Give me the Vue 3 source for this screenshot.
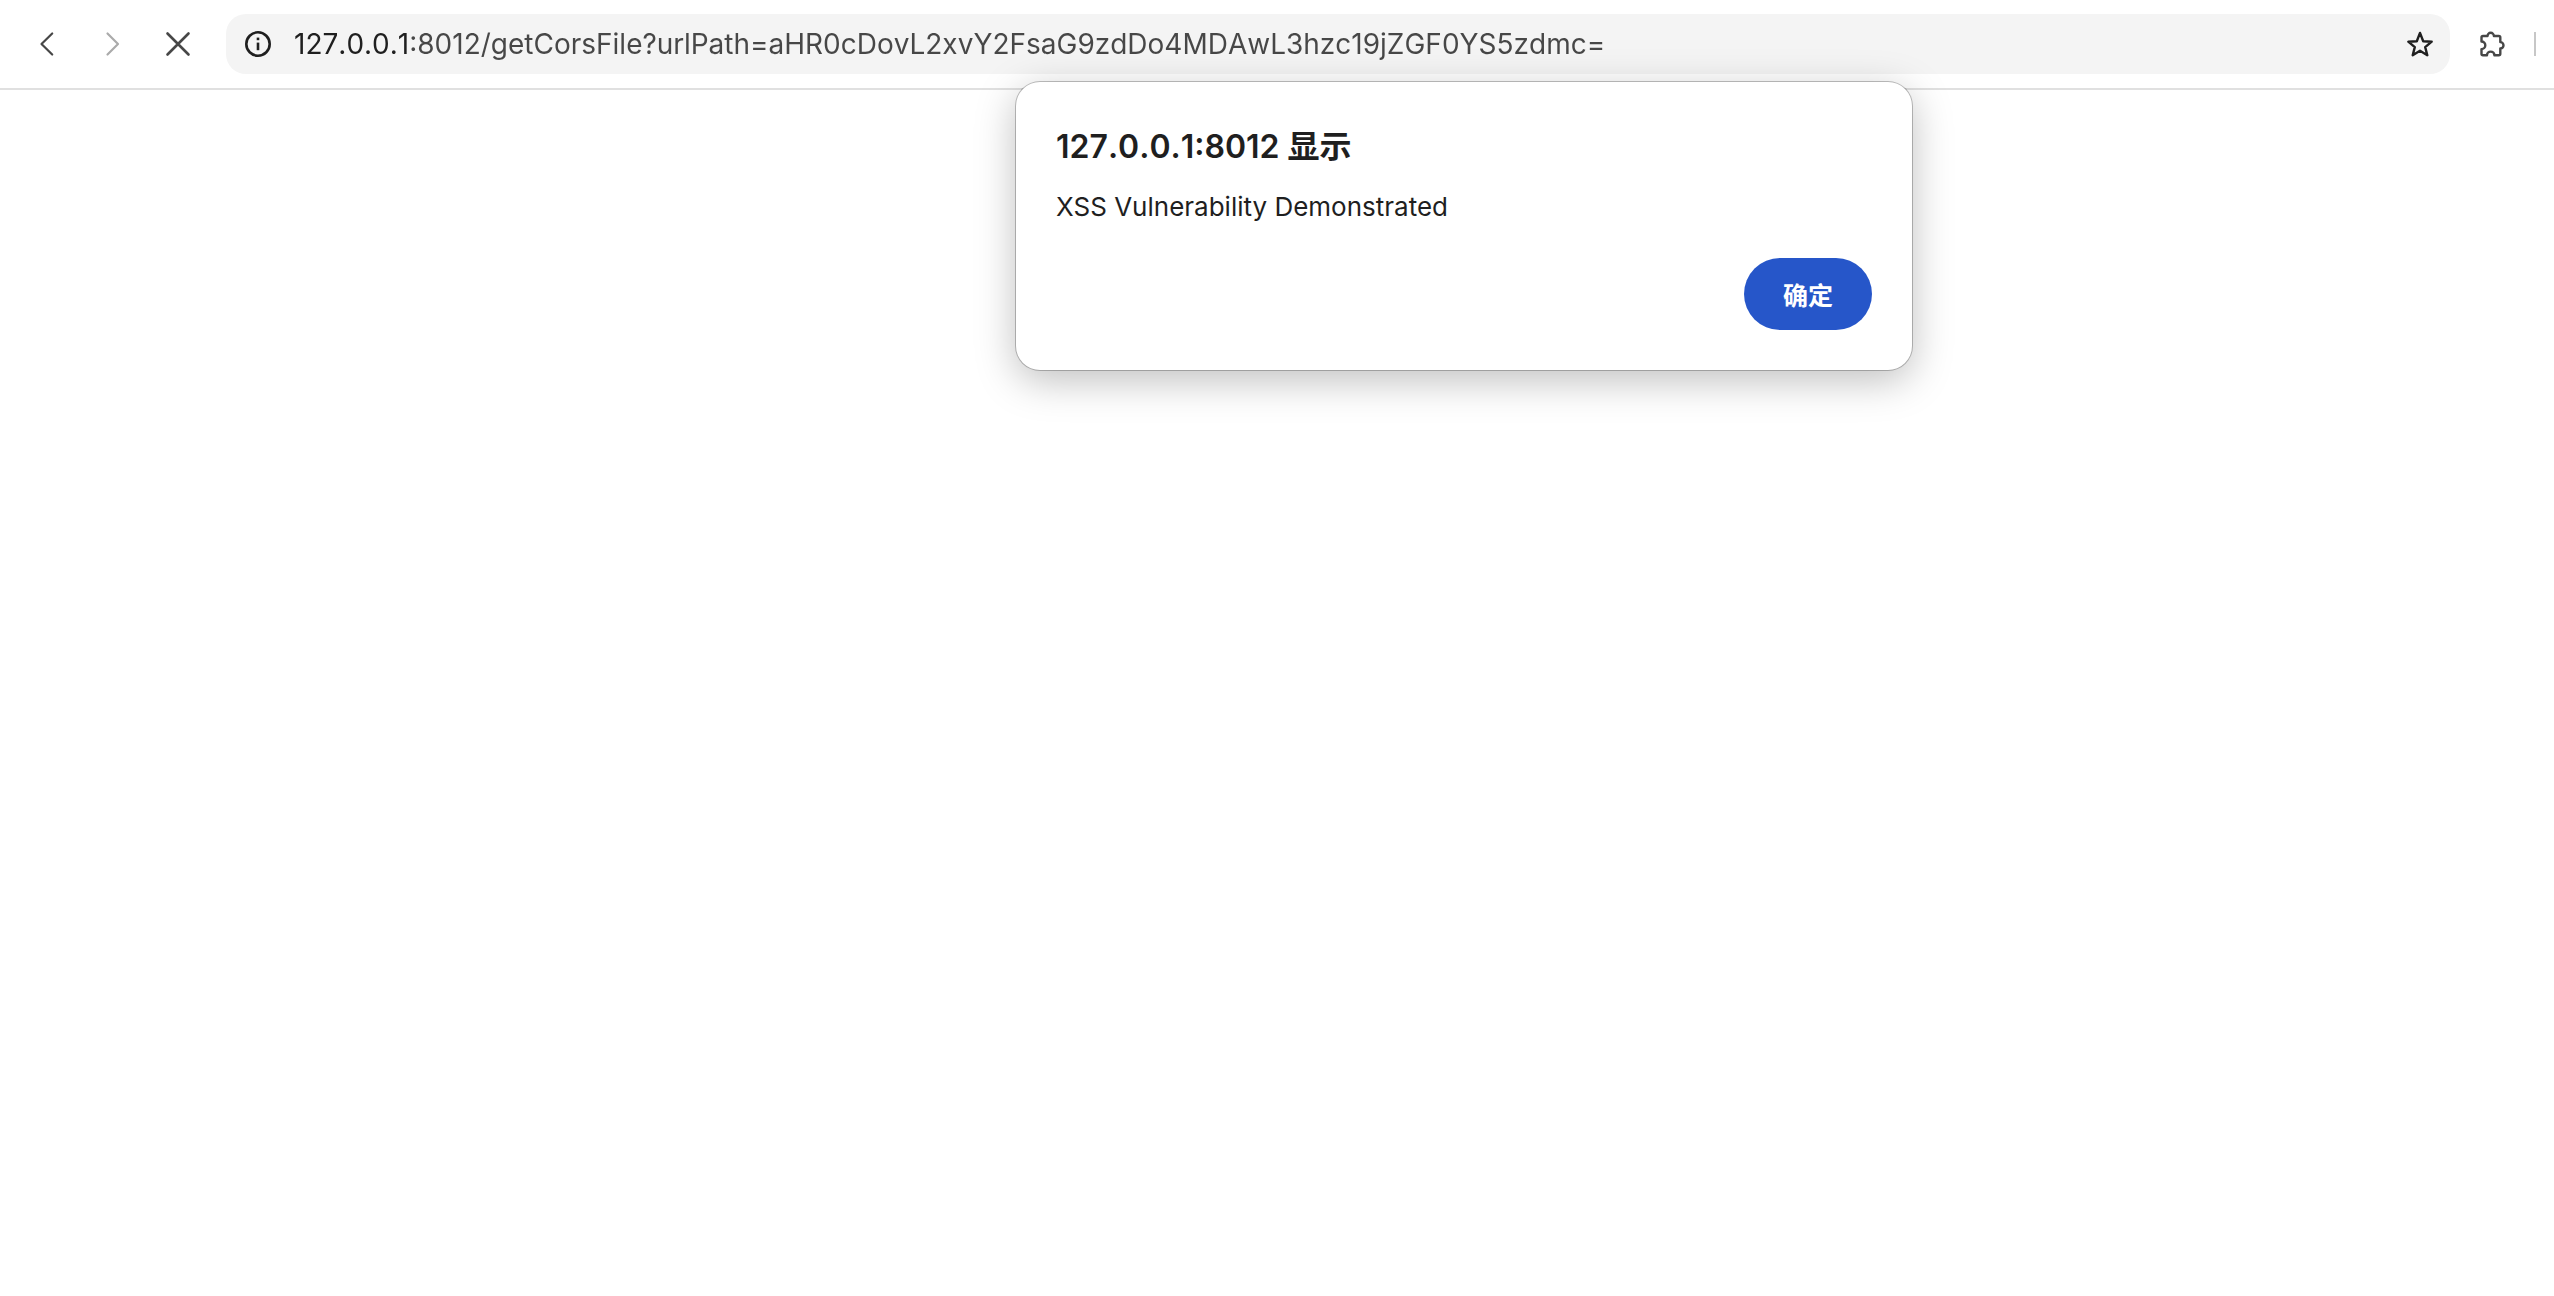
<template>
  <div class="browser">
    <header class="toolbar">
      <nav class="nav-buttons">
        <button class="icon-btn" type="button" aria-label="后退">
          <svg width="28" height="28" viewBox="0 0 28 28"><path d="M18.2 3.5 7.5 14 18.2 24.5" /></svg>
        </button>
        <button class="icon-btn forward" type="button" aria-label="前进">
          <svg width="28" height="28" viewBox="0 0 28 28"><path d="M8.5 3.5 19 14 8.5 24.5" /></svg>
        </button>
        <button class="icon-btn stop" type="button" aria-label="停止">
          <svg width="28" height="28" viewBox="0 0 28 28"><path d="M3.5 3.5l21 21M24.5 3.5l-21 21" /></svg>
        </button>
      </nav>

      <form class="address-bar" @submit.prevent>
        <button class="bar-btn" type="button" aria-label="网站信息">
          <svg width="28" height="28" viewBox="0 0 28 28">
            <circle cx="14" cy="14" r="11.7" />
            <path d="M14 12.6v7.6" />
            <path d="M14 7.6v2.6" />
          </svg>
        </button>
        <input v-model="url" class="url" type="text" aria-label="地址栏" spellcheck="false" />
        <button class="bar-btn star" type="button" aria-label="添加书签">
          <svg width="28" height="28" viewBox="0 0 28 28">
            <path d="M14 2.9l3.2 8.3 8.5.5-6.5 5.4 2.1 8.1-7.3-4.5-7.3 4.5 2.1-8.1-6.5-5.4 8.5-.5z" />
          </svg>
        </button>
      </form>

      <button class="bar-btn extensions" type="button" aria-label="扩展程序">
        <svg width="28" height="28" viewBox="0 0 28 28">
          <path d="M5 6h4.5a3.2 3.2 0 0 1 6.4 0h4.9a1.5 1.5 0 0 1 1.5 1.5v4.6a3.2 3.2 0 0 1 0 6.4v5.3a1.5 1.5 0 0 1-1.5 1.5h-4.4a3.7 3.7 0 0 0-7.4 0H5a1.5 1.5 0 0 1-1.5-1.5v-4.7a3.8 3.8 0 0 0 0-7.6V7.5A1.5 1.5 0 0 1 5 6z" />
        </svg>
      </button>
      <span class="divider"></span>
    </header>

    <div v-if="visible" class="dialog-layer">
      <section class="dialog" role="alertdialog" aria-labelledby="dialog-title" aria-describedby="dialog-message">
        <h1 id="dialog-title">127.0.0.1:8012 显示</h1>
        <p id="dialog-message">XSS Vulnerability Demonstrated</p>
        <div class="dialog-actions">
          <button class="ok-btn" type="button" @click="visible = false">确定</button>
        </div>
      </section>
    </div>
  </div>
</template>

<script setup>
import { ref } from 'vue'

const url = ref('127.0.0.1:8012/getCorsFile?urlPath=aHR0cDovL2xvY2FsaG9zdDo4MDAwL3hzc19jZGF0YS5zdmc=')
const visible = ref(true)
</script>

<style>
body {
  margin: 0;
  background: #fff;
}
</style>

<style scoped>
.browser {
  position: relative;
  min-height: 100vh;
  font-family: Inter, "Noto Sans CJK SC", sans-serif;
  color: #1f1f1f;
}

.toolbar {
  display: flex;
  align-items: center;
  box-sizing: border-box;
  height: 90px;
  padding: 0 18px;
  border-bottom: 2px solid #e0e0e0;
}

.nav-buttons {
  display: flex;
  gap: 5px;
}

button {
  padding: 0;
  border: none;
  background: none;
  font-family: inherit;
  cursor: pointer;
}

svg {
  display: block;
  fill: none;
  stroke: currentColor;
  stroke-width: 2.2;
  stroke-linecap: round;
  stroke-linejoin: round;
}

.icon-btn {
  display: flex;
  align-items: center;
  justify-content: center;
  width: 60px;
  height: 60px;
  color: #474747;
}

.forward {
  color: #ababab;
}

.stop svg {
  stroke-width: 2.6;
}

.address-bar {
  display: flex;
  flex: 1;
  align-items: center;
  gap: 22px;
  box-sizing: border-box;
  height: 60px;
  margin-left: 18px;
  padding: 0 16px 0 18px;
  border-radius: 20px;
  background: #f4f4f4;
}

.bar-btn {
  color: #1f1f1f;
}

.bar-btn svg {
  stroke-width: 2.6;
  stroke-linecap: butt;
}

.star svg {
  stroke-width: 2.4;
}

/* host part is darker than the rest of the address */
.url {
  flex: 1;
  min-width: 0;
  height: 44px;
  padding: 0;
  border: none;
  outline: none;
  background: linear-gradient(to right, #1f1f1f 116px, #474747 116px);
  background-clip: text;
  -webkit-background-clip: text;
  color: transparent;
  caret-color: #1f1f1f;
  font-family: inherit;
  font-size: 28px;
  font-kerning: none;
}

.extensions {
  margin-left: 28px;
  color: #474747;
}

.extensions svg {
  stroke-width: 2.4;
}

.divider {
  width: 2px;
  height: 24px;
  margin-left: 28px;
  background: #c7c7c7;
}

.dialog-layer {
  position: absolute;
  top: 82px;
  right: 0;
  left: 374px;
  display: flex;
  justify-content: center;
}

.dialog {
  box-sizing: border-box;
  width: 896px;
  padding: 41px 40px 40px;
  border-radius: 24px;
  background: #fff;
  box-shadow: 0 0 0 1px rgba(0, 0, 0, 0.24), 0 10px 40px rgba(0, 0, 0, 0.26);
}

h1 {
  margin: 0 0 16px;
  font-size: 32px;
  font-weight: 600;
  line-height: 48px;
  font-kerning: none;
}

p {
  margin: 0 0 31px;
  font-size: 26px;
  line-height: 40px;
}

.dialog-actions {
  display: flex;
  justify-content: flex-end;
}

.ok-btn {
  width: 128px;
  height: 72px;
  border-radius: 36px;
  background: #2656c9;
  color: #fff;
  font-size: 25px;
  font-weight: 700;
}
</style>
